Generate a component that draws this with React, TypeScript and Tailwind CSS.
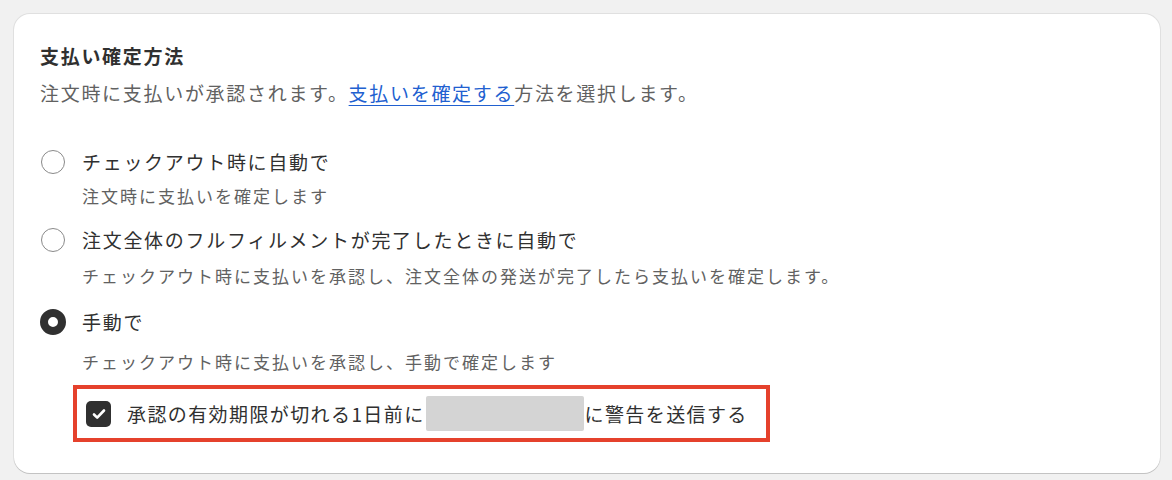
const font = { fontFamily: '"Noto Sans CJK JP", "Noto Sans", sans-serif' }

function Radio({ checked }: { checked?: boolean }) {
    return (
        <span className="flex h-[26px] w-[26px] shrink-0 items-center justify-center">
            {checked ? (
                <span className="h-[26px] w-[26px] rounded-full border-[8px] border-[#303030] bg-white" />
            ) : (
                <span className="h-[24px] w-[24px] rounded-full border border-[#8a8a8a] bg-white" />
            )}
        </span>
    )
}

function Option({ label, help, checked, rowClass, helpClass }: { label: string; help: string; checked?: boolean; rowClass: string; helpClass: string }) {
    return (
        <div>
            <label className={`flex items-center gap-[16px] ${rowClass}`}>
                <Radio checked={checked} />
                <span className="text-[19px] leading-[28px] tracking-[1.7px] text-[#303030]">{label}</span>
            </label>
            <p className={`pl-[42px] text-[17px] leading-[26px] tracking-[2px] text-[#616161] ${helpClass}`}>{help}</p>
        </div>
    )
}

export default function App() {
    return (
        <div className="h-[480px] w-[1172px] bg-[#f1f1f1] pt-[14px] pl-[14px]" style={font}>
            <div className="h-[459px] w-[1146px] rounded-[16px] bg-white pt-[28px] pl-[26px] shadow-[0_1px_0_0_rgba(0,0,0,0.13),0_0_0_1px_rgba(0,0,0,0.07)]">
                <h2 className="text-[19px] font-bold leading-[28px] tracking-[1.7px] text-[#303030]">支払い確定方法</h2>
                <p className="mt-[9px] text-[19px] leading-[28px] tracking-[1.7px] text-[#616161]">
                    注文時に支払いが承認されます。
                    <a href="#" className="text-[#2160d0] underline underline-offset-[4px]">支払いを確定する</a>
                    方法を選択します。
                </p>

                <div className="mt-[41px]">
                    <Option label="チェックアウト時に自動で" help="注文時に支払いを確定します" rowClass="" helpClass="mt-[7px]" />
                    <Option label="注文全体のフルフィルメントが完了したときに自動で" help="チェックアウト時に支払いを承認し、注文全体の発送が完了したら支払いを確定します。" rowClass="mt-[17px]" helpClass="mt-[9px]" />
                    <Option label="手動で" help="チェックアウト時に支払いを承認し、手動で確定します" checked rowClass="mt-[19px]" helpClass="mt-[13px]" />
                </div>

                <div className="ml-[33px] mt-[10px] flex h-[57px] w-[697px] items-center border-[4px] border-[#e5412c] pl-[9px]">
                    <span className="flex h-[26px] w-[25px] items-center justify-center rounded-[5px] bg-[#303030]">
                        <svg width="14" height="12" viewBox="0 0 14 12" fill="none">
                            <path d="M2 6.5l3.2 3.2L12 2.5" stroke="white" strokeWidth="2.6" strokeLinecap="round" strokeLinejoin="round" />
                        </svg>
                    </span>
                    <span className="ml-[16px] flex items-center text-[19px] leading-[28px] tracking-[1.4px] text-[#303030]">
                        承認の有効期限が切れる1日前に
                        <span className="mx-[1px] inline-block h-[35px] w-[158px] rounded-[2px] bg-[#d4d4d4]" />
                        に警告を送信する
                    </span>
                </div>
            </div>
        </div>
    )
}
